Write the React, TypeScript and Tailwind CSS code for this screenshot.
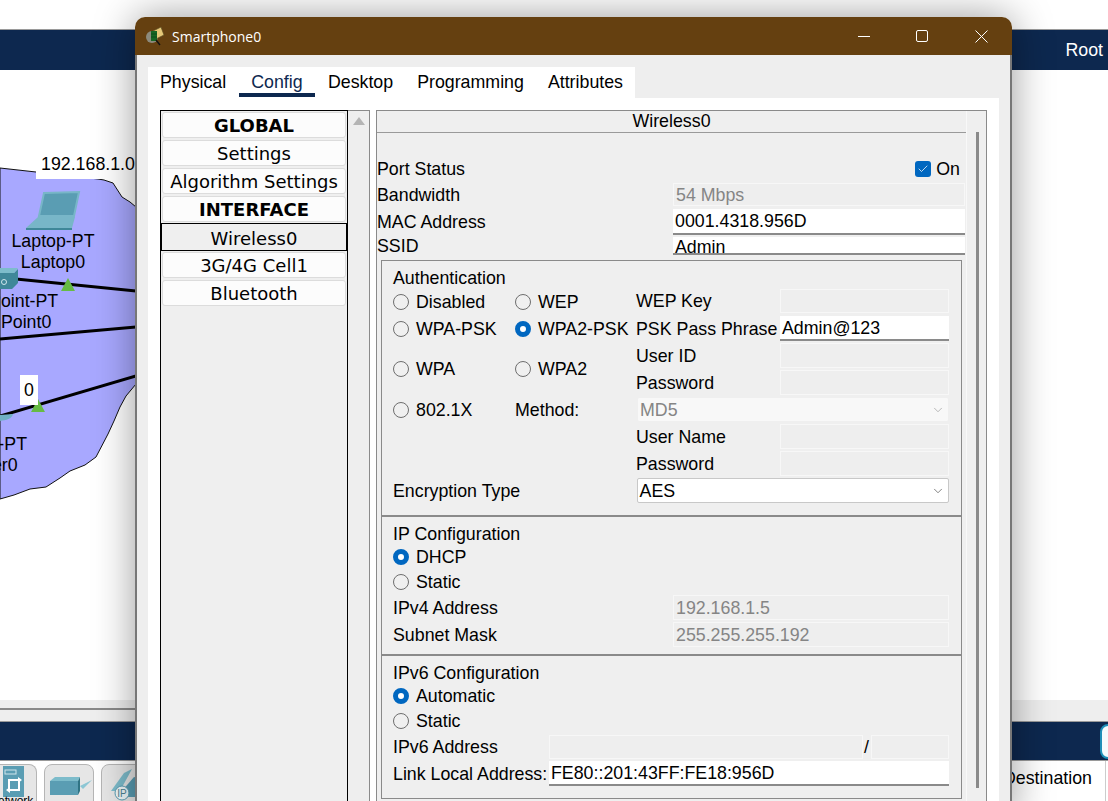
import type { ReactNode } from 'react';
import { Check, ChevronDown } from 'lucide-react';

function Radio({ on = false }: { on?: boolean }) {
  return on ? (
    <span className="w-4 h-4 shrink-0 rounded-full bg-white border-[5px] border-[#0067c0]" />
  ) : (
    <span className="w-4 h-4 shrink-0 rounded-full bg-[#f0f0f0] border border-[#6e6e6e]" />
  );
}

function RadioLabel({ label, on }: { label: string; on?: boolean }) {
  return (
    <div className="flex items-center gap-[7px]">
      <Radio on={on} />
      <span className="whitespace-nowrap">{label}</span>
    </div>
  );
}

function Field({ value, active = false, className = '' }: { value?: string; active?: boolean; className?: string }) {
  const tone = active
    ? 'bg-white border-b-2 border-[#8a8a8a] text-black'
    : 'bg-[#eeeeee] border border-[#f7f7f7] text-[#858585]';
  return <div className={`flex items-center pl-[2px] whitespace-nowrap ${tone} ${className}`}>{value}</div>;
}

function Row({ label, children, className = '' }: { label: ReactNode; children: ReactNode; className?: string }) {
  return (
    <div className={`flex items-center ${className}`}>
      {label}
      {children}
    </div>
  );
}

function NavItem({ label, bold, selected }: { label: string; bold?: boolean; selected?: boolean }) {
  if (selected) {
    return (
      <div className="h-[28px] -my-px pt-[3px] flex items-center justify-center bg-[#efefef] border border-black">
        {label}
      </div>
    );
  }
  return (
    <div
      className={`h-[26px] mx-px pt-px flex items-center justify-center bg-[#fcfcfc] border border-[#dcdcdc] rounded-[3px] ${bold ? 'font-bold' : ''}`}
    >
      {label}
    </div>
  );
}

function Canvas() {
  return (
    <div className="relative flex-1 bg-white text-[17.8px] leading-[21px] text-black">
      {/* network cloud, coordinates are relative to the canvas */}
      <svg className="absolute left-0 top-0" width="136" height="440" viewBox="0 70 136 440">
        <path
          d="M0 168 L36 172 L98 179 L104 180 L113 183 L122 197 L130 202 L136 207 L136 384 L126 396 L120 407 L114 421 L108 434 L96 457 L85 465 L70 471 L60 478 L46 487 L30 489 L14 495 L0 499 Z"
          fill="#a8a8ff"
          stroke="#111"
          strokeWidth="1"
        />
        <path d="M16 279 L136 291" stroke="#000" strokeWidth="3" />
        <path d="M0 339 L136 327" stroke="#000" strokeWidth="3" />
        <path d="M0 416 L136 376" stroke="#000" strokeWidth="3" />
        <path d="M61 291 L68 278 L75 291 Z" fill="#66bb44" />
        <path d="M31 412 L38 399 L45 412 Z" fill="#66bb44" />
        {/* laptop */}
        <path d="M39 216 L44 193 L79 192 L74 216 Z" fill="#5a9db3" stroke="#78b6c8" strokeWidth="2" />
        <path d="M26 228 L38 217 L75 217 L72 228 Z" fill="#78b6c8" />
        <path d="M26 228 L72 228 L72 230 L26 230 Z" fill="#3f8799" />
        {/* access point */}
        <path d="M0 273 L14 273 L18 269 L18 283 L12 289 L0 289 Z" fill="#3f8799" />
        <path d="M0 268 L18 268 L14 273 L0 273 Z" fill="#7dbccb" />
        <circle cx="4" cy="282" r="2.5" fill="none" stroke="#cfe6ec" strokeWidth="1" />
        {/* router edge */}
        <path d="M0 415 L13 414 C12 419 6 420 0 421 Z" fill="#6fb0c4" />
      </svg>

      <div className="absolute left-[36px] top-[79px] h-[30px] w-[110px] bg-white flex items-center pl-[5px] whitespace-nowrap">
        192.168.1.0
      </div>
      <div className="absolute left-[20px] top-[305px] h-[30px] w-[18px] bg-white flex items-center justify-center">
        0
      </div>
      <div className="absolute left-[3px] top-[161px] w-[100px] text-center">
        Laptop-PT
        <br />
        Laptop0
      </div>
      {/* these two devices sit partly off the left edge of the canvas */}
      <div className="absolute left-[-85px] top-[221px] w-[160px] text-center whitespace-nowrap">
        AccessPoint-PT
        <br />
        Access Point0
      </div>
      <div className="absolute left-[-94px] top-[364px] w-[160px] text-center whitespace-nowrap">
        Router-PT
        <br />
        Router0
      </div>
    </div>
  );
}

function DeviceButton({ children, className = '' }: { children: ReactNode; className?: string }) {
  return (
    <div className={`h-[44px] shrink-0 rounded-t-[8px] border border-[#b5b5b5] bg-[#e6e6e6] overflow-hidden ${className}`}>
      {children}
    </div>
  );
}

function BottomArea() {
  return (
    <>
      <div className="h-[21px] shrink-0 bg-[#eeeeee] pt-[8px]">
        <div className="h-[2px] w-[600px] bg-[#8a8a8a]" />
      </div>
      <div className="relative h-[40px] shrink-0 bg-[#0d284f] border-y border-[#9a9a9a]">
        <div className="absolute left-[1100px] top-[2px] h-[35px] w-[30px] rounded-[8px] bg-[#f4fbfd] border-2 border-[#1d8fb8]" />
      </div>
      <div className="relative h-[40px] shrink-0 overflow-hidden bg-white flex items-start pt-[3px] gap-[7px]">
        <DeviceButton className="w-[37px] border-l-0 rounded-tl-none">
          <div className="relative w-full h-full">
            <svg className="absolute left-[3px] top-[1px]" width="21" height="31" viewBox="0 0 21 31">
              <rect x="0" y="0" width="21" height="31" fill="#5a9db3" />
              <rect x="2" y="4" width="11" height="4" fill="none" stroke="#cfe6ec" />
              <path d="M6 14 H16 V24 H6 Z" fill="none" stroke="#fff" strokeWidth="2" />
              <path d="M15 11 L19 14 L15 17 M7 21 L3 24 L7 27" fill="#fff" />
            </svg>
            <span className="absolute left-[-2px] top-[30px] text-[12px] leading-[12px] text-black">etwork</span>
          </div>
        </DeviceButton>
        <DeviceButton className="w-[50px]">
          <svg className="ml-[2px] mt-[11px]" width="46" height="20" viewBox="0 0 46 20">
            <path d="M3 5 L31 5 L31 19 L3 19 Z" fill="#5a9db3" />
            <path d="M3 5 L8 1 L33 1 L31 5 Z" fill="#7dbccb" />
            <path d="M31 5 L33 1 L33 15 L31 19 Z" fill="#2f7485" />
            <path d="M33 10 L45 4 L36 13 Z" fill="#8cc6d4" />
          </svg>
        </DeviceButton>
        <DeviceButton className="w-[50px]">
          <svg className="ml-[4px] mt-[2px]" width="40" height="34" viewBox="0 0 40 34">
            <path d="M5 24 L18 6 L26 2 L14 24 Z" fill="#7dbccb" />
            <path d="M15 25 L28 10 L38 12 L38 30 L20 30 Z" fill="#5a9db3" />
            <circle cx="16" cy="26" r="7" fill="#eef6f8" stroke="#5a9db3" />
            <text x="16" y="30" textAnchor="middle" fontSize="10" fill="#4a7f8f">IP</text>
          </svg>
        </DeviceButton>
        <div className="absolute left-[1003px] top-[6px] text-[17.8px] leading-[22px] text-black whitespace-nowrap">
          Destination
        </div>
        <div className="absolute left-[1105px] top-0 bottom-0 w-px bg-[#cccccc]" />
      </div>
    </>
  );
}

function TitleIcon() {
  return (
    <svg width="20" height="20" viewBox="0 0 20 20">
      <circle cx="7" cy="11" r="6" fill="#8c8a7c" />
      <path d="M8 5 L16 1 L19 9 L11 13 Z" fill="#e6c878" stroke="#5a4a20" strokeWidth="0.7" />
      <rect x="6" y="5" width="6" height="10" fill="#1f7a2c" />
      <path d="M7 5V15M9 5V15M11 5V15M6 8H12M6 11H12" stroke="#0c3d14" strokeWidth="0.6" />
      <path d="M11 14 L15 19" stroke="#111" strokeWidth="1.4" />
    </svg>
  );
}

function WindowControls() {
  return (
    <div className="flex items-center ml-auto text-white">
      <svg className="mr-[46px]" width="12" height="12" viewBox="0 0 12 12">
        <path d="M0 6.5 H12" stroke="#fff" strokeWidth="1" />
      </svg>
      <svg className="mr-[47px]" width="12" height="12" viewBox="0 0 12 12">
        <rect x="0.5" y="0.5" width="11" height="11" rx="1.5" fill="none" stroke="#fff" strokeWidth="1" />
      </svg>
      <svg className="mr-[24px]" width="13" height="13" viewBox="0 0 13 13">
        <path d="M0.5 0.5 L12.5 12.5 M12.5 0.5 L0.5 12.5" stroke="#fff" strokeWidth="1" />
      </svg>
    </div>
  );
}

function Sidebar() {
  return (
    <div className="flex w-[210px] shrink-0 font-['DejaVu_Sans',sans-serif] text-[18px] leading-[20px] text-black">
      <div className="w-[188px] border border-black bg-[#efefef] pt-px flex flex-col gap-[2px]">
        <NavItem label="GLOBAL" bold />
        <NavItem label="Settings" />
        <NavItem label="Algorithm Settings" />
        <NavItem label="INTERFACE" bold />
        <NavItem label="Wireless0" selected />
        <NavItem label="3G/4G Cell1" />
        <NavItem label="Bluetooth" />
      </div>
      <div className="flex-1 bg-[#eeeeee] border-y border-r border-[#8a8a8a] flex justify-center pt-[6px]">
        <svg width="12" height="8" viewBox="0 0 12 8">
          <path d="M0 8 L6 0 L12 8 Z" fill="#b4b4b4" />
        </svg>
      </div>
    </div>
  );
}

function AuthSection() {
  const leftLabel = 'w-[122px]';
  const input = 'w-[169px] h-[25px]';
  return (
    <div className="pl-[11px] pr-[12px] pt-[7px] pb-[12px]">
      <div className="h-[20px] leading-[20px]">Authentication</div>
      <div className="flex mt-px">
        <div className="w-[243px]">
          <div className="h-[24px] pt-[2px] flex items-center">
            <div className={leftLabel}><RadioLabel label="Disabled" /></div>
            <RadioLabel label="WEP" />
          </div>
          <div className="h-[25px] mt-[3px] flex items-center">
            <div className={leftLabel}><RadioLabel label="WPA-PSK" /></div>
            <RadioLabel label="WPA2-PSK" on />
          </div>
          <div className="h-[25px] mt-[15px] flex items-center">
            <div className={leftLabel}><RadioLabel label="WPA" /></div>
            <RadioLabel label="WPA2" />
          </div>
          <div className="h-[25px] mt-[15px] pt-[2px] flex items-center">
            <div className={leftLabel}><RadioLabel label="802.1X" /></div>
            <span>Method:</span>
          </div>
        </div>
        <div className="w-[313px]">
          <Row label={<span className="w-[144px] whitespace-nowrap">WEP Key</span>}>
            <Field className="w-[169px] h-[24px]" />
          </Row>
          <Row className="mt-[3px]" label={<span className="w-[144px] whitespace-nowrap">PSK Pass Phrase</span>}>
            <Field className={input} value="Admin@123" active />
          </Row>
          <Row className="mt-[2px]" label={<span className="w-[144px]">User ID</span>}>
            <Field className={input} />
          </Row>
          <Row className="mt-[2px]" label={<span className="w-[144px]">Password</span>}>
            <Field className={input} />
          </Row>
          <div className="mt-[2px] ml-px h-[25px] flex items-center justify-between pl-[2px] pr-[3px] bg-[#f8f8f8] border border-[#efefef] rounded-[2px] text-[#858585]">
            MD5
            <ChevronDown size={14} strokeWidth={1.25} color="#a0a0a0" />
          </div>
          <Row className="mt-[2px]" label={<span className="w-[144px]">User Name</span>}>
            <Field className={input} />
          </Row>
          <Row className="mt-[2px]" label={<span className="w-[144px]">Password</span>}>
            <Field className={input} />
          </Row>
        </div>
      </div>
      <div className="flex items-center mt-[2px] h-[25px]">
        <span className="w-[244px]">Encryption Type</span>
        <div className="w-[313px] h-[25px] flex items-center justify-between pl-[2px] pr-[3px] bg-white border border-[#c8c8c8] rounded-[2px]">
          AES
          <ChevronDown size={14} strokeWidth={1.25} color="#555" />
        </div>
      </div>
    </div>
  );
}

function IpSection() {
  return (
    <div className="pl-[11px] pr-[12px] pt-[7px] pb-[7px] border-y-2 border-[#8a8a8a]">
      <div className="h-[20px] leading-[20px]">IP Configuration</div>
      <div className="h-[24px] pt-[2px] flex items-center"><RadioLabel label="DHCP" on /></div>
      <div className="h-[24px] mt-px pt-[2px] flex items-center"><RadioLabel label="Static" /></div>
      <Row className="mt-[2px]" label={<span className="w-[280px]">IPv4 Address</span>}>
        <Field className="w-[276px] h-[25px]" value="192.168.1.5" />
      </Row>
      <Row className="mt-[2px]" label={<span className="w-[280px]">Subnet Mask</span>}>
        <Field className="w-[276px] h-[25px]" value="255.255.255.192" />
      </Row>
    </div>
  );
}

function Ipv6Section() {
  return (
    <div className="pl-[11px] pr-[12px] pt-[7px] pb-[12px]">
      <div className="h-[20px] leading-[20px]">IPv6 Configuration</div>
      <div className="h-[24px] pt-[2px] flex items-center"><RadioLabel label="Automatic" on /></div>
      <div className="h-[24px] mt-px pt-[2px] flex items-center"><RadioLabel label="Static" /></div>
      <Row className="mt-[3px]" label={<span className="w-[156px]">IPv6 Address</span>}>
        <Field className="w-[314px] h-[24px]" />
        <span className="w-[8px] pl-px">/</span>
        <Field className="w-[78px] h-[24px]" />
      </Row>
      <Row className="mt-[2px]" label={<span className="w-[156px] whitespace-nowrap">Link Local Address:</span>}>
        <Field className="w-[400px] h-[25px]" value="FE80::201:43FF:FE18:956D" active />
      </Row>
    </div>
  );
}

function WirelessPanel() {
  return (
    <div className="w-[611px] border-x border-t border-[#8a8a8a] bg-[#efefef] flex text-[17.8px] leading-[18px] text-black">
      <div className="w-[589px]">
        <div className="h-[22px] border-b border-[#9a9a9a] text-center leading-[20px]">Wireless0</div>
        <div className="pt-[25px] pr-px">
          <div className="h-[22px] flex items-center justify-between pr-[5px]">
            Port Status
            <div className="flex items-center gap-[5px]">
              <span className="w-4 h-4 rounded-[3px] bg-[#0067c0] flex items-center justify-center">
                <Check size={12} strokeWidth={1.5} color="#fff" />
              </span>
              On
            </div>
          </div>
          <Row className="mt-[3px]" label={<span className="w-[296px]">Bandwidth</span>}>
            <Field className="w-[292px] h-[23px]" value="54 Mbps" />
          </Row>
          <Row className="mt-[3px]" label={<span className="w-[296px]">MAC Address</span>}>
            <Field className="w-[292px] h-[26px]" value="0001.4318.956D" active />
          </Row>
          <Row className="mt-[2px]" label={<span className="w-[296px]">SSID</span>}>
            <Field className="w-[292px] h-[18px] pt-[3px]" value="Admin" active />
          </Row>
        </div>
        <div className="mt-[5px] ml-[4px] w-[581px] border border-[#8a8a8a]">
          <AuthSection />
          <IpSection />
          <Ipv6Section />
        </div>
      </div>
      <div className="flex-1 border-l border-[#f8f8f8] pl-[9px] pt-[21px]">
        <div className="w-[3px] h-[656px] bg-[#8a8a8a]" />
      </div>
    </div>
  );
}

const TABS = [
  { name: 'Physical', cls: 'w-[79px]' },
  { name: 'Config', cls: 'w-[76px] text-center border-b-4 border-[#0d284f] text-[#0d284f]' },
  { name: 'Desktop', cls: 'pl-[13px] pr-[12px]' },
  { name: 'Programming', cls: 'px-[12px]' },
  { name: 'Attributes', cls: 'px-[12px]' },
];

function ConfigWindow() {
  return (
    <div className="absolute left-[135px] top-[17px] w-[877px] h-[800px] flex flex-col rounded-t-[10px] shadow-[0_0_40px_rgba(0,0,0,0.4)]">
      <div className="h-[38px] shrink-0 bg-[#654010] rounded-t-[10px] flex items-center pl-[10px] text-white text-[15px]">
        <TitleIcon />
        <span className="ml-[7px] font-['Open_Sans',sans-serif] text-[14px]">Smartphone0</span>
        <WindowControls />
      </div>
      <div className="flex-1 bg-[#eeeeee] border-x-2 border-[#777777] px-[11px] pt-[12px] flex flex-col">
        <div className="w-[487px] h-[31px] bg-white flex items-start pl-[12px] text-[17.8px] text-black">
          {TABS.map((tab) => (
            <div key={tab.name} className={`h-[30px] leading-[30px] whitespace-nowrap ${tab.cls}`}>
              {tab.name}
            </div>
          ))}
        </div>
        <div className="flex-1 bg-white pl-[12px] pt-[12px] flex gap-[6px]">
          <Sidebar />
          <WirelessPanel />
        </div>
      </div>
    </div>
  );
}

export default function App() {
  return (
    <div className="relative w-[1108px] h-[801px] overflow-hidden bg-white font-['Liberation_Sans',Arial,sans-serif]">
      <div className="flex flex-col h-full">
        <div className="h-[29px] shrink-0 bg-white" />
        <div className="h-[41px] shrink-0 bg-[#0d284f] border-t border-[#9a9a9a] flex items-center justify-end pr-[5px] text-white text-[17.8px]">
          Root
        </div>
        <Canvas />
        <BottomArea />
      </div>
      <ConfigWindow />
    </div>
  );
}
